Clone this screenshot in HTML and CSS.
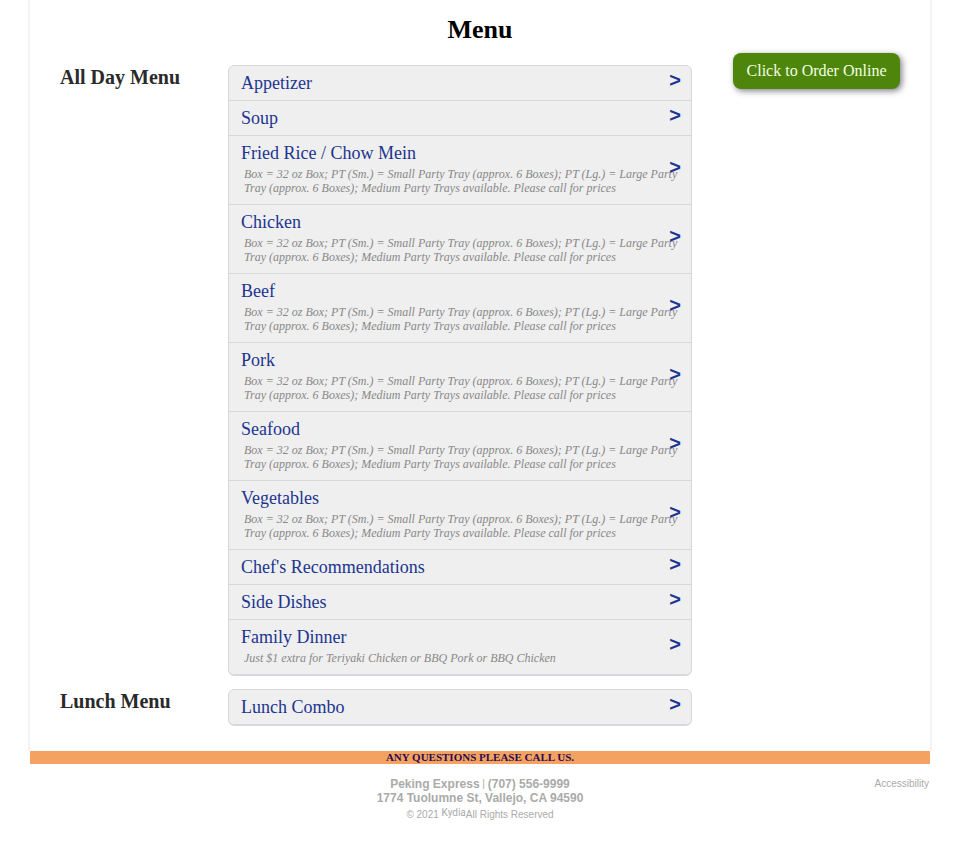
FILE: index.html
```html
<!DOCTYPE html>
<html lang="en">
<head>
    <meta charset="UTF-8">
    <meta name="viewport" content="width=device-width, initial-scale=1.0">
    <title>Menu - Peking Express</title>
    <link rel="stylesheet" href="styles.css">
</head>
<body>
    <div class="page">
        <h1>Menu</h1>
        <div class="content">
            <main class="menus">
                <section class="menu">
                    <h2>All Day Menu</h2>
                    <ul class="menu-list">
                        <li><a href="#">Appetizer</a></li>
                        <li><a href="#">Soup</a></li>
                        <li><a href="#">Fried Rice / Chow Mein
                            <span class="note">Box = 32 oz Box; PT (Sm.) = Small Party Tray (approx. 6 Boxes); PT (Lg.) = Large Party Tray (approx. 6 Boxes); Medium Party Trays available. Please call for prices</span></a></li>
                        <li><a href="#">Chicken
                            <span class="note">Box = 32 oz Box; PT (Sm.) = Small Party Tray (approx. 6 Boxes); PT (Lg.) = Large Party Tray (approx. 6 Boxes); Medium Party Trays available. Please call for prices</span></a></li>
                        <li><a href="#">Beef
                            <span class="note">Box = 32 oz Box; PT (Sm.) = Small Party Tray (approx. 6 Boxes); PT (Lg.) = Large Party Tray (approx. 6 Boxes); Medium Party Trays available. Please call for prices</span></a></li>
                        <li><a href="#">Pork
                            <span class="note">Box = 32 oz Box; PT (Sm.) = Small Party Tray (approx. 6 Boxes); PT (Lg.) = Large Party Tray (approx. 6 Boxes); Medium Party Trays available. Please call for prices</span></a></li>
                        <li><a href="#">Seafood
                            <span class="note">Box = 32 oz Box; PT (Sm.) = Small Party Tray (approx. 6 Boxes); PT (Lg.) = Large Party Tray (approx. 6 Boxes); Medium Party Trays available. Please call for prices</span></a></li>
                        <li><a href="#">Vegetables
                            <span class="note">Box = 32 oz Box; PT (Sm.) = Small Party Tray (approx. 6 Boxes); PT (Lg.) = Large Party Tray (approx. 6 Boxes); Medium Party Trays available. Please call for prices</span></a></li>
                        <li><a href="#">Chef's Recommendations</a></li>
                        <li><a href="#">Side Dishes</a></li>
                        <li><a href="#">Family Dinner
                            <span class="note">Just $1 extra for Teriyaki Chicken or BBQ Pork or BBQ Chicken</span></a></li>
                    </ul>
                </section>
                <section class="menu">
                    <h2>Lunch Menu</h2>
                    <ul class="menu-list">
                        <li><a href="#">Lunch Combo</a></li>
                    </ul>
                </section>
            </main>
            <button class="order" type="button">Click to Order Online</button>
        </div>
    </div>

    <div class="questions">ANY QUESTIONS PLEASE CALL US.</div>

    <footer>
        <div class="info">
            <div><b>Peking Express</b> | <b>(707) 556-9999</b></div>
            <div><b>1774 Tuolumne St, Vallejo, CA 94590</b></div>
            <div class="copyright">© 2021 <a class="kydia" href="#">Kydia</a>All Rights Reserved</div>
        </div>
        <a class="accessibility" href="#">Accessibility</a>
    </footer>
</body>
</html>
```
FILE: styles.css
```css
* {
    margin: 0;
    padding: 0;
    box-sizing: border-box;
}

body {
    padding: 0 28px;
    background: #fff;
    font-family: "Liberation Serif", "Times New Roman", serif;
}

a {
    color: inherit;
    text-decoration: none;
}

.page {
    padding: 15px 30px 25px;
    border: 2px solid #f3f3f6;
    border-width: 0 2px;
}

h1 {
    font-size: 26px;
    line-height: 30px;
    text-align: center;
}

.content {
    display: flex;
    align-items: flex-start;
    gap: 41px;
    margin-top: 8px;
}

.menus {
    flex: 1;
    display: flex;
    flex-direction: column;
    gap: 13px;
    padding-top: 12px;
}

.menu {
    display: flex;
    align-items: flex-start;
}

h2 {
    flex: 0 0 168px;
    color: #2a2a2a;
    font-size: 20px;
    line-height: 24px;
}

.menu-list {
    flex: 1;
    list-style: none;
    background: #efefef;
    border: 1px solid #d8d8dc;
    border-radius: 6px;
}

.menu-list li {
    position: relative;
    border-bottom: 1px solid #d8d8dc;
}

.menu-list li:last-child {
    border-radius: 0 0 5px 5px;
}

.menu-list a {
    display: block;
    padding: 7px 12px;
    color: #1c358f;
    font-size: 18px;
    line-height: 20px;
}

/* arrow on the right of each row, drawn over the note */
.menu-list a::after {
    content: ">";
    position: absolute;
    top: 50%;
    right: 10px;
    margin-top: -14px;
    font: bold 20px/22px "Liberation Sans", Arial, sans-serif;
}

.note {
    display: block;
    padding: 4px 0 2px 3px;
    color: #888;
    font-size: 12px;
    font-style: italic;
    line-height: 14px;
}

.order {
    width: 167px;
    height: 36px;
    border: none;
    border-radius: 8px;
    background: #4d860a;
    box-shadow: 2px 2px 6px rgba(0, 0, 30, 0.5);
    color: #f4ffe4;
    font-family: inherit;
    font-size: 16px;
    white-space: nowrap;
    cursor: pointer;
}

.questions {
    margin: 0 2px;
    background: #f4a261;
    color: #2b0a50;
    font-size: 11px;
    font-weight: bold;
    line-height: 13px;
    text-align: center;
}

footer {
    display: grid;
    grid-template-columns: 1fr auto 1fr;
    padding: 13px 3px;
    color: #aaa;
    font-family: "Liberation Sans", Arial, sans-serif;
    font-size: 10px;
    line-height: 14px;
}

.info {
    grid-column: 2;
    text-align: center;
}

.info b {
    font-size: 12px;
    vertical-align: top;
}

.copyright {
    margin-top: 3px;
}

.kydia {
    font-family: Roboto, sans-serif;
    font-size: 10px;
    line-height: 10px;
    vertical-align: 2px;
}

.accessibility {
    justify-self: end;
}
```
